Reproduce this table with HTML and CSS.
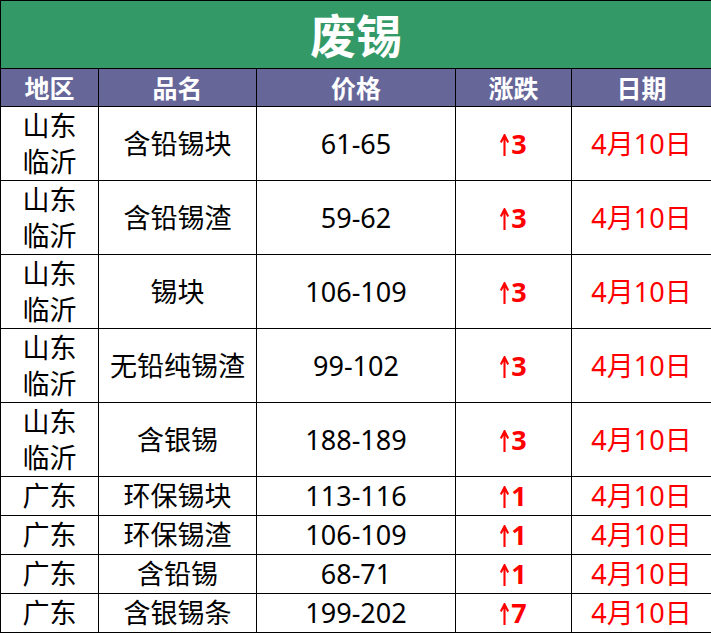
FILE: index.html
```html
<!DOCTYPE html>
<html lang="zh">
<head>
<meta charset="utf-8">
<link rel="stylesheet" href="styles.css">
</head>
<body>
<table class="sheet">
  <colgroup>
    <col class="c1"><col class="c2"><col class="c3"><col class="c4"><col class="c5">
  </colgroup>
  <tr class="title"><td colspan="5">废锡</td></tr>
  <tr class="head"><td>地区</td><td>品名</td><td>价格</td><td>涨跌</td><td>日期</td></tr>
  <tr class="tall"><td>山东<br>临沂</td><td>含铅锡块</td><td>61-65</td><td class="up"><svg class="ar" viewBox="0 0 9 22" aria-label="↑"><path d="M4.5 2 V22 M0.8 8.5 L4.5 1.2 L8.2 8.5"/></svg><b>3</b></td><td class="date">4月10日</td></tr>
  <tr class="tall"><td>山东<br>临沂</td><td>含铅锡渣</td><td>59-62</td><td class="up"><svg class="ar" viewBox="0 0 9 22" aria-label="↑"><path d="M4.5 2 V22 M0.8 8.5 L4.5 1.2 L8.2 8.5"/></svg><b>3</b></td><td class="date">4月10日</td></tr>
  <tr class="tall"><td>山东<br>临沂</td><td>锡块</td><td>106-109</td><td class="up"><svg class="ar" viewBox="0 0 9 22" aria-label="↑"><path d="M4.5 2 V22 M0.8 8.5 L4.5 1.2 L8.2 8.5"/></svg><b>3</b></td><td class="date">4月10日</td></tr>
  <tr class="tall"><td>山东<br>临沂</td><td>无铅纯锡渣</td><td>99-102</td><td class="up"><svg class="ar" viewBox="0 0 9 22" aria-label="↑"><path d="M4.5 2 V22 M0.8 8.5 L4.5 1.2 L8.2 8.5"/></svg><b>3</b></td><td class="date">4月10日</td></tr>
  <tr class="tall"><td>山东<br>临沂</td><td>含银锡</td><td>188-189</td><td class="up"><svg class="ar" viewBox="0 0 9 22" aria-label="↑"><path d="M4.5 2 V22 M0.8 8.5 L4.5 1.2 L8.2 8.5"/></svg><b>3</b></td><td class="date">4月10日</td></tr>
  <tr class="short"><td>广东</td><td>环保锡块</td><td>113-116</td><td class="up"><svg class="ar" viewBox="0 0 9 22" aria-label="↑"><path d="M4.5 2 V22 M0.8 8.5 L4.5 1.2 L8.2 8.5"/></svg><b>1</b></td><td class="date">4月10日</td></tr>
  <tr class="short"><td>广东</td><td>环保锡渣</td><td>106-109</td><td class="up"><svg class="ar" viewBox="0 0 9 22" aria-label="↑"><path d="M4.5 2 V22 M0.8 8.5 L4.5 1.2 L8.2 8.5"/></svg><b>1</b></td><td class="date">4月10日</td></tr>
  <tr class="short"><td>广东</td><td>含铅锡</td><td>68-71</td><td class="up"><svg class="ar" viewBox="0 0 9 22" aria-label="↑"><path d="M4.5 2 V22 M0.8 8.5 L4.5 1.2 L8.2 8.5"/></svg><b>1</b></td><td class="date">4月10日</td></tr>
  <tr class="short"><td>广东</td><td>含银锡条</td><td>199-202</td><td class="up"><svg class="ar" viewBox="0 0 9 22" aria-label="↑"><path d="M4.5 2 V22 M0.8 8.5 L4.5 1.2 L8.2 8.5"/></svg><b>7</b></td><td class="date">4月10日</td></tr>
</table>
</body>
</html>
```
FILE: styles.css
```css
html, body {
  margin: 0;
  padding: 0;
  background: #fff;
}
.sheet {
  border-collapse: collapse;
  table-layout: fixed;
  width: 711px;
  font-family: "Noto Sans", "Noto Sans CJK SC", sans-serif;
  font-size: 27px;
  color: #000;
}
.c1 { width: 98px; }
.c2 { width: 158px; }
.c3 { width: 199px; }
.c4 { width: 116px; }
.c5 { width: 140px; }
.sheet td {
  border: 1.5px solid #000;
  text-align: center;
  vertical-align: middle;
  padding: 0;
  line-height: 36px;
}
.title td {
  background: #339966;
  color: #fff;
  font-weight: bold;
  font-size: 46px;
  height: 67px;
  line-height: 60px;
}
.head td {
  background: #666699;
  color: #fff;
  font-weight: bold;
  font-size: 25px;
  height: 37px;
  line-height: 36px;
}
.tall td { height: 73px; }
.short td { height: 38px; }
.up, .date { color: #ff0000; }
.up b {
  font-weight: bold;
  margin-left: 2px;
}
.ar {
  width: 9px;
  height: 22px;
  vertical-align: -2px;
  fill: none;
  stroke: #ff0000;
  stroke-width: 2.1;
}
```
